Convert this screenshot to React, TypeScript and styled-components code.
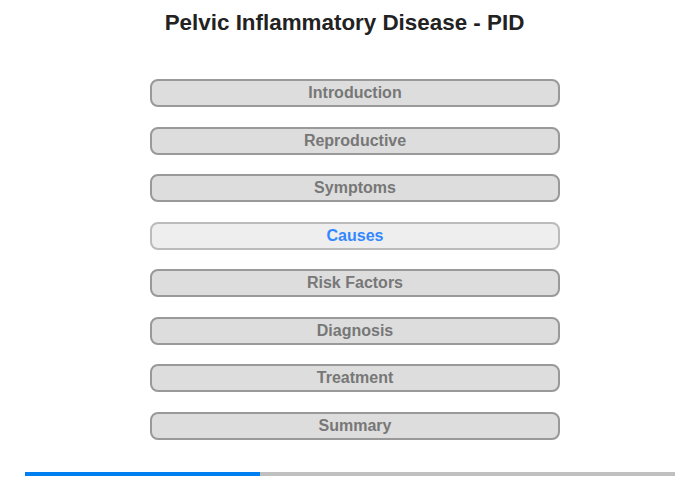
import React from "react";
import styled, { createGlobalStyle } from "styled-components";

const Global = createGlobalStyle`
  html, body { margin: 0; padding: 0; background: #fff; }
  body { font-family: "Liberation Sans", Arial, sans-serif; }
`;

const Page = styled.div`
  width: 700px;
  height: 480px;
  display: flex;
  flex-direction: column;
  align-items: center;
  box-sizing: border-box;
`;

const Title = styled.h1`
  margin: 10px 11px 0 0;
  font-size: 22.4px;
  font-weight: bold;
  color: #222;
  line-height: 26px;
`;

const Menu = styled.nav`
  margin-top: 43px;
  margin-left: 10px;
  display: flex;
  flex-direction: column;
  gap: 19.5px;
`;

const NavButton = styled.div<{ $active?: boolean }>`
  width: 410px;
  height: 28px;
  box-sizing: border-box;
  border: 2px solid ${(p) => (p.$active ? "#bbb" : "#999")};
  border-radius: 8px;
  background: ${(p) => (p.$active ? "#eee" : "#ddd")};
  color: ${(p) => (p.$active ? "#3388ff" : "#777")};
  font-size: 16px;
  font-weight: bold;
  display: flex;
  align-items: center;
  justify-content: center;
`;

const Progress = styled.div`
  margin-top: auto;
  margin-bottom: 4px;
  width: 650px;
  height: 4px;
  background: #c0c0c0;
  display: flex;
`;

const Fill = styled.div`
  height: 100%;
  background: #0080f0;
`;

const items = [
  "Introduction",
  "Reproductive",
  "Symptoms",
  "Causes",
  "Risk Factors",
  "Diagnosis",
  "Treatment",
  "Summary",
];

export default function App() {
  const active = 3;
  return (
    <>
      <Global />
      <Page>
        <Title>Pelvic Inflammatory Disease - PID</Title>
        <Menu>
          {items.map((t, i) => (
            <NavButton key={t} $active={i === active}>
              {t}
            </NavButton>
          ))}
        </Menu>
        <Progress>
          <Fill style={{ width: `${(235 / 650) * 100}%` }} />
        </Progress>
      </Page>
    </>
  );
}
